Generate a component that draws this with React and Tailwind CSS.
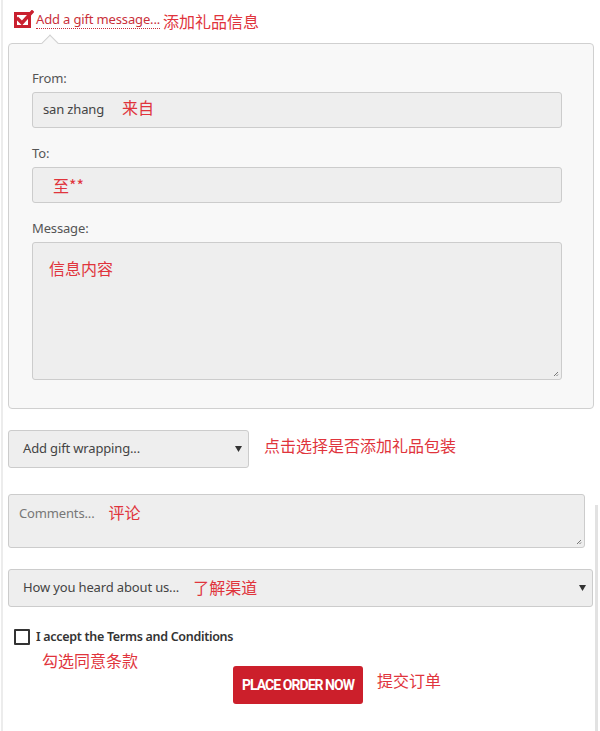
import React from "react";

const body = { fontFamily: '"Noto Sans", "Open Sans", sans-serif', letterSpacing: "-0.15px" };
const cjk = { fontFamily: '"Noto Sans CJK SC", "Noto Sans", sans-serif', letterSpacing: "0px" };

function Note({ children, className = "" }) {
  return (
    <span className={"text-[16px] leading-[20px] text-[#e0343c] " + className} style={cjk}>
      {children}
    </span>
  );
}

function Grip() {
  return (
    <svg className="absolute right-[2px] bottom-[2px]" width="6" height="6" viewBox="0 0 6 6">
      <path d="M5 1 L1 5 M5 3.5 L3.5 5" stroke="#777" strokeWidth="1" />
    </svg>
  );
}

function Caret() {
  return (
    <svg width="7" height="6" viewBox="0 0 7 6">
      <path d="M0 0 H7 L3.5 6 Z" fill="#333" />
    </svg>
  );
}

export default function App() {
  return (
    <div className="relative w-[600px] h-[731px] bg-white overflow-hidden" style={body}>
      <div className="absolute left-[1px] top-0 h-full w-[2px] bg-[#ececec]" />
      <div className="absolute left-[595px] top-[505px] h-[226px] w-[3px] bg-[#e2e2e2]" />

      <div className="pl-[8px] pt-[8px]">
        {/* gift message toggle */}
        <div className="flex items-center h-[22px] pl-[6px]">
          <svg width="20" height="18" viewBox="0 0 20 18" className="mr-[2px]">
            <rect x="1.5" y="3.5" width="14" height="13" fill="none" stroke="#c9202f" strokeWidth="3" />
            <path d="M4 9 L8 13 L18 2" fill="none" stroke="#c9202f" strokeWidth="3.4" strokeLinecap="square" />
          </svg>
          <span className="text-[13px] leading-[18px] text-[#c9303a] border-b border-dotted border-[#c9303a]">
            Add a gift message...
          </span>
          <Note className="ml-[3px] mt-[4px]">添加礼品信息</Note>
        </div>

        {/* gift panel */}
        <div className="relative mt-[13px] w-[586px] bg-[#f8f8f8] border border-[#d0d0d0] rounded-[4px] pl-[23px] pt-[25px] pb-[28px]">
          <div className="absolute left-[35px] top-[-7px] w-[12px] h-[12px] bg-[#f8f8f8] border-t border-l border-[#d0d0d0] rotate-45" />

          <div className="text-[13px] leading-[18px] text-[#555]">From:</div>
          <div className="mt-[5px] w-[530px] h-[36px] bg-[#eeeeee] border border-[#cccccc] rounded-[3px] flex items-center pl-[10px]">
            <span className="text-[13px] text-[#444]">san zhang</span>
            <Note className="ml-[18px] mb-[6px]">来自</Note>
          </div>

          <div className="mt-[16px] text-[13px] leading-[18px] text-[#555]">To:</div>
          <div className="mt-[5px] w-[530px] h-[36px] bg-[#eeeeee] border border-[#cccccc] rounded-[3px] flex items-center pl-[20px]">
            <Note>至**</Note>
          </div>

          <div className="mt-[16px] text-[13px] leading-[18px] text-[#555]">Message:</div>
          <div className="relative mt-[5px] w-[530px] h-[138px] bg-[#eeeeee] border border-[#cccccc] rounded-[3px] pl-[16px] pt-[14px]">
            <Note>信息内容</Note>
            <Grip />
          </div>
        </div>

        {/* gift wrapping */}
        <div className="mt-[21px] flex items-center">
          <div className="w-[241px] h-[38px] bg-[#eeeeee] border border-[#cccccc] rounded-[3px] flex items-center pl-[14px] pr-[6px]">
            <span className="text-[13px] text-[#444] flex-1">Add gift wrapping...</span>
            <Caret />
          </div>
          <Note className="ml-[15px] mb-[8px]">点击选择是否添加礼品包装</Note>
        </div>

        {/* comments */}
        <div className="relative mt-[26px] w-[577px] h-[54px] bg-[#eeeeee] border border-[#cccccc] rounded-[3px] pl-[10px] pt-[7px] flex items-start">
          <span className="text-[13px] leading-[22px] text-[#777]">Comments...</span>
          <Note className="ml-[14px]">评论</Note>
          <Grip />
        </div>

        {/* how heard */}
        <div className="mt-[21px] w-[585px] h-[38px] bg-[#eeeeee] border border-[#cccccc] rounded-[3px] flex items-center pl-[14px] pr-[6px]">
          <span className="text-[13px] text-[#444]">How you heard about us...</span>
          <Note className="ml-[14px] mb-[2px]">了解渠道</Note>
          <span className="flex-1" />
          <Caret />
        </div>

        {/* terms */}
        <div className="mt-[21px] flex items-center pl-[6px]">
          <div className="w-[16px] h-[16px] border-2 border-[#333] rounded-[1px] bg-white" />
          <span className="ml-[6px] text-[12.5px] leading-[18px] font-semibold text-[#333] tracking-[-0.3px]">
            I accept the Terms and Conditions
          </span>
        </div>
        <div className="pl-[34px] mt-[4px] leading-[20px]">
          <Note>勾选同意条款</Note>
        </div>

        {/* place order */}
        <div className="flex items-start mt-[-5px] pl-[225px]">
          <div
            className="w-[130px] h-[38px] bg-[#cc1f2b] rounded-[3px] flex items-center justify-center text-white text-[14px] font-bold tracking-[-0.95px]"
            style={{ fontFamily: '"Roboto", "Liberation Sans", sans-serif' }}
          >
            PLACE ORDER NOW
          </div>
          <Note className="ml-[14px] mt-[4px]">提交订单</Note>
        </div>
      </div>
    </div>
  );
}
